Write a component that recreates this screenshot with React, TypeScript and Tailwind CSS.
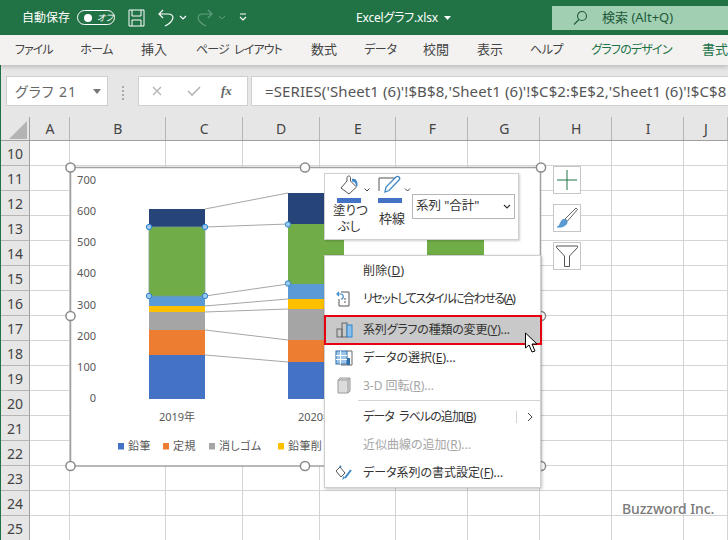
import React from "react";

const font = "font-['Noto_Sans','Noto_Sans_CJK_JP',sans-serif]";

const tabs = [
  { t: "ファイル", c: "w-[37px] ml-[15px] tracking-[-1px]" },
  { t: "ホーム", c: "w-[33px] ml-[28px] tracking-[-0.6px]" },
  { t: "挿入", c: "w-[26px] ml-[28px] text-[13px]" },
  { t: "ページ レイアウト", c: "w-[85px] ml-[29px] tracking-[-0.9px] [word-spacing:3px]" },
  { t: "数式", c: "w-[26px] ml-[30px] text-[13px]" },
  { t: "データ", c: "w-[31px] ml-[27px] tracking-[-0.3px]" },
  { t: "校閲", c: "w-[26px] ml-[28px] text-[13px]" },
  { t: "表示", c: "w-[26px] ml-[28px] text-[13px]" },
  { t: "ヘルプ", c: "w-[32px] ml-[27px] tracking-[-0.4px]" },
  { t: "グラフのデザイン", c: "w-[81px] ml-[29px] text-[#217346] tracking-[-0.8px]" },
  { t: "書式", c: "w-[26px] ml-[30px] text-[#217346] text-[13px]" },
];

const cols = [
  { n: "A", c: "w-[40px]" },
  { n: "B", c: "w-[96px]" },
  { n: "C", c: "w-[77px]" },
  { n: "D", c: "w-[77px]" },
  { n: "E", c: "w-[77px]" },
  { n: "F", c: "w-[72px]" },
  { n: "G", c: "w-[72px]" },
  { n: "H", c: "w-[72px]" },
  { n: "I", c: "w-[72px]" },
  { n: "J", c: "w-[44px]" },
];

const rows = [10, 11, 12, 13, 14, 15, 16, 17, 18, 19, 20, 21, 22, 23, 24, 25];

function Chart() {
  const colors = ["#4472c4", "#ed7d31", "#a5a5a5", "#ffc000", "#5b9bd5", "#70ad47", "#264478"];
  const b1 = [399, 355, 330, 312, 306, 296, 227, 209];
  const b2 = [399, 362, 340, 309, 299, 284, 224, 193];
  const yl = [["700", 184], ["600", 215], ["500", 246], ["400", 277], ["300", 309], ["200", 340], ["100", 371], ["0", 402]] as const;
  const legend = [
    ["鉛筆", 118, 128, colors[0]],
    ["定規", 163, 173, colors[1]],
    ["消しゴム", 209, 219, colors[2]],
    ["鉛筆削", 278, 288, colors[3]],
  ] as const;
  const pts = [[149, 227], [205, 227], [149, 296], [205, 296], [288, 224.5], [288, 283.5]];
  const handles = [[70.5, 167.5], [305, 167.5], [541, 167.5], [70.5, 316], [541, 316], [70.5, 466], [305, 466], [541, 466]];
  return (
    <svg className="absolute left-0 top-0" width="728" height="540" viewBox="0 0 728 540">
      <rect x="70.5" y="167.5" width="470" height="298.5" fill="#fff" stroke="#a0a0a0" strokeWidth="1.5" />
      {yl.map(([t, y]) => (
        <text key={t} x="96" y={y} textAnchor="end" fontSize="11" fill="#595959">{t}</text>
      ))}
      {b1.slice(0, -1).map((y, i) => (
        <rect key={i} x="149" y={b1[i + 1]} width="56" height={y - b1[i + 1]} fill={colors[i]} />
      ))}
      {b2.slice(0, -1).map((y, i) => (
        <rect key={i} x="288" y={b2[i + 1]} width="56" height={y - b2[i + 1]} fill={colors[i]} />
      ))}
      <rect x="427" y="200" width="57" height="60" fill={colors[5]} />
      {b1.slice(1).map((y, i) => (
        <line key={i} x1="205" y1={y} x2="288" y2={b2[i + 1]} stroke="#a6a6a6" strokeWidth="1" />
      ))}
      <rect x="149" y="227" width="56" height="69" fill="none" stroke="#7f9f8f" strokeWidth="0.8" />
      {pts.map(([x, y], i) => (
        <circle key={i} cx={x} cy={y} r="2.7" fill="#9dc8ec" stroke="#2f86d0" strokeWidth="1" />
      ))}
      <text x="177" y="421" textAnchor="middle" fontSize="11" fill="#595959">2019年</text>
      <text x="316" y="421" textAnchor="middle" fontSize="11" fill="#595959">2020年</text>
      {legend.map(([t, sx, tx, c]) => (
        <g key={t}>
          <rect x={sx} y="443" width="6" height="6.5" fill={c} />
          <text x={tx} y="450" fontSize="11" letterSpacing="0.4" fill="#595959">{t}</text>
        </g>
      ))}
      {handles.map(([x, y], i) => (
        <circle key={i} cx={x} cy={y} r="4.6" fill="#fff" stroke="#8a8a8a" strokeWidth="1.5" />
      ))}
    </svg>
  );
}

function MiniToolbar() {
  return (
    <div className="absolute left-[324px] top-[173px] flex h-[67px] w-[195px] border border-[#d0d0d0] bg-white shadow-[1px_1px_2px_rgba(0,0,0,0.2)]">
      <div className="ml-[8px] flex w-[40px] flex-col">
        <svg width="42" height="30" viewBox="0 0 42 30">
          <path d="M8 14 L14 7 V3.5 C14 1.5 17.5 1.5 17.5 3.5 V7 L23.5 13 L16 20 Z" fill="#fff" stroke="#555" strokeWidth="1" />
          <path d="M19 5 C23 4 25 8 24.5 12 L23 12 C23 9 21.5 7.5 19 7.5 Z" fill="#3f88c8" />
          <rect x="4" y="24" width="24" height="5" fill="#4472c4" />
          <path d="M31.5 14.5 L34 17 L36.5 14.5" fill="none" stroke="#444" strokeWidth="1" />
        </svg>
        <div className="mt-[-1px] w-[32px] whitespace-nowrap text-center text-[12.5px] leading-[16px] text-[#333]">
          <div>塗りつ</div>
          <div>ぶし</div>
        </div>
      </div>
      <div className="ml-[4px] flex w-[36px] flex-col items-center">
        <svg width="38" height="30" viewBox="0 0 38 30">
          <path d="M3 17 V4 H20" fill="none" stroke="#555" strokeWidth="1" />
          <path d="M9 18 L10 13 L20 3 C22 1 25 4 23 6 L13 16.5 Z" fill="#fff" stroke="#3f88c8" strokeWidth="1.3" />
          <path d="M2 24 H26 V29 H2 Z" fill="#4472c4" />
          <path d="M29 14.5 L31.5 17 L34 14.5" fill="none" stroke="#444" strokeWidth="1" />
        </svg>
        <div className="mt-[6px] ml-[-6px] text-[13px] leading-[16px] text-[#333]">枠線</div>
      </div>
      <div className="ml-[-1px] mt-[20px] flex h-[25px] w-[103px] items-center justify-between border border-[#b5b5b5] pl-[3px] pr-[3px] text-[12.5px] text-[#333]">
        <span>系列 "合計"</span>
        <svg width="8" height="6" viewBox="0 0 8 6"><path d="M1 1 L4 4 L7 1" fill="none" stroke="#333" strokeWidth="1.2" /></svg>
      </div>
    </div>
  );
}

function Underlined({ a, k, b, c }: { a: string; k: string; b: string; c?: string }) {
  return (
    <span className={c}>
      {a}(<span className="underline">{k}</span>){b}
    </span>
  );
}

function Menu() {
  return (
    <div className="absolute left-[324px] top-[255px] h-[233px] w-[217px] border border-[#cfcfcf] bg-white pt-[1px] text-[12px] text-[#333] shadow-[1px_1px_3px_rgba(0,0,0,0.25)]">
      <div className="flex h-[28px] items-center pl-[38px]"><Underlined a="削除" k="D" b="" c="tracking-[0.3px]" /></div>
      <div className="flex h-[28px] items-center">
        <span className="flex w-[38px] justify-center">
          <svg width="16" height="18" viewBox="0 0 16 18">
            <path d="M5 2 H13 V16 H3 V9" fill="none" stroke="#555" strokeWidth="1" />
            <path d="M1 4 H5 C8 4 8 9 5 9 M3 2 L1 4 L3 6" fill="none" stroke="#3f88c8" strokeWidth="1.2" />
            <path d="M8 9 H10 M8 12 H10" stroke="#555" strokeWidth="1" />
          </svg>
        </span>
        <Underlined a="リセットしてスタイルに合わせる" k="A" b="" c="tracking-[-1.4px]" />
      </div>
      <div className="ml-[-1px] mt-[2px] mb-[-1px] flex h-[30px] w-[218px] items-center border-2 border-[#e60012] bg-[#c9c9c9]">
        <span className="flex w-[37px] justify-center">
          <svg width="18" height="16" viewBox="0 0 18 16">
            <rect x="1" y="7" width="5" height="8" fill="none" stroke="#666" />
            <rect x="6" y="1" width="5" height="14" fill="none" stroke="#666" />
            <rect x="11" y="3" width="5" height="12" fill="#8cc0ec" stroke="#2f86d0" />
          </svg>
        </span>
        <Underlined a="系列グラフの種類の変更" k="Y" b="..." c="tracking-[-0.2px]" />
      </div>
      <div className="flex h-[28px] items-center">
        <span className="flex w-[38px] justify-center">
          <svg width="18" height="16" viewBox="0 0 18 16">
            <rect x="1" y="1" width="11" height="13" fill="#9cc6ea" stroke="#2f6ea8" />
            <path d="M1 5.5 H12 M1 9.5 H12 M5.5 1 V14" stroke="#fff" strokeWidth="1" />
            <path d="M12 1 H17 V15 H6" fill="none" stroke="#666" />
            <rect x="12" y="8" width="3" height="7" fill="#2f6ea8" />
          </svg>
        </span>
        <Underlined a="データの選択" k="E" b="..." />
      </div>
      <div className="flex h-[28px] items-center text-[#a6a6a6]">
        <span className="flex w-[38px] justify-center">
          <svg width="16" height="18" viewBox="0 0 16 18">
            <path d="M2 3 H12 L14 1 M2 3 V16 H12 V3 M12 16 L14 14 V1 H4 L2 3" fill="#dcdcdc" stroke="#9a9a9a" />
          </svg>
        </span>
        <Underlined a="3-D 回転" k="R" b="..." />
      </div>
      <div className="ml-[33px] h-[1px] w-[182px] bg-[#d4d4d4]" />
      <div className="mt-[2px] flex h-[28px] items-center pl-[38px]">
        <Underlined a="データ ラベルの追加" k="B" b="" c="tracking-[-0.9px] [word-spacing:3px]" />
        <span className="ml-auto flex h-[12px] w-[24px] items-center justify-center border-l border-[#d4d4d4] pl-[2px]">
          <svg width="8" height="10" viewBox="0 0 8 10"><path d="M2 1 L6 5 L2 9" fill="none" stroke="#444" strokeWidth="1" /></svg>
        </span>
      </div>
      <div className="flex h-[28px] items-center pl-[38px] text-[#a6a6a6]"><Underlined a="近似曲線の追加" k="R" b="..." /></div>
      <div className="flex h-[28px] items-center">
        <span className="flex w-[38px] justify-center">
          <svg width="18" height="16" viewBox="0 0 18 16">
            <path d="M1 6 L5 2 L10 8 L6 12 Z" fill="#fff" stroke="#555" />
            <path d="M5 2 L6 0.8 M10 13 L16 5" stroke="#3f88c8" strokeWidth="2" />
            <path d="M7 15 L10 13 L8.5 11 Z" fill="#3f88c8" />
          </svg>
        </span>
        <Underlined a="データ系列の書式設定" k="F" b="..." />
      </div>
    </div>
  );
}

function SideButtons() {
  return (
    <div className="absolute left-[553px] top-[166px] flex flex-col gap-[10px]">
      <div className="flex h-[28px] w-[28px] items-center justify-center border border-[#c6c6c6] bg-white">
        <svg width="22" height="22" viewBox="0 0 22 22"><path d="M11 1 V21 M1 11 H21" stroke="#217346" strokeWidth="1" /></svg>
      </div>
      <div className="flex h-[28px] w-[28px] items-center justify-center border border-[#c6c6c6] bg-white">
        <svg width="24" height="24" viewBox="0 0 24 24">
          <path d="M10 13 L21 2 L22.5 3.5 L12.5 15 Z" fill="#fff" stroke="#666" strokeWidth="1" />
          <path d="M2 21 C5 21 5 15 8 13.5 C10 12.5 13 15 12 17 C11 20 6 22 2 21 Z" fill="#5b9bd5" stroke="#3f88c8" strokeWidth="0.6" />
        </svg>
      </div>
      <div className="flex h-[28px] w-[28px] items-center justify-center border border-[#c6c6c6] bg-white">
        <svg width="24" height="24" viewBox="0 0 24 24"><path d="M1.5 2 H22.5 V3.5 L14.5 12 V22.5 H9.5 V12 L1.5 3.5 Z" fill="#fff" stroke="#555" strokeWidth="1" /></svg>
      </div>
    </div>
  );
}

export default function App() {
  return (
    <div className={`relative h-[540px] w-[728px] overflow-hidden bg-white [font-feature-settings:'palt'] ${font}`}>
      <div className="flex h-[35px] items-center bg-[#217346] text-white">
        <span className="ml-[22px] text-[12px]">自動保存</span>
        <div className="ml-[7px] flex h-[15px] w-[38px] items-center rounded-full border border-white pl-[6px]">
          <span className="h-[8px] w-[8px] rounded-full bg-white" />
          <span className="ml-[5px] text-[9px] italic leading-none">オフ</span>
        </div>
        <svg className="ml-[13px]" width="17" height="18" viewBox="0 0 17 18">
          <path d="M1 1 H16 V17 H1 Z M4 1 V7 H13 V1 M4 17 V11 H13 V17" fill="none" stroke="#fff" strokeWidth="1" />
        </svg>
        <svg className="ml-[12px]" width="18" height="18" viewBox="0 0 18 18">
          <path d="M6 1 L2 5 L6 9 M2 5 H11 C18 5 18 12 8 17" fill="none" stroke="#fff" strokeWidth="1.2" />
        </svg>
        <svg className="ml-[4px]" width="8" height="6" viewBox="0 0 8 6"><path d="M1 1 L4 4 L7 1" fill="none" stroke="#fff" strokeWidth="1.2" /></svg>
        <svg className="ml-[9px]" width="18" height="18" viewBox="0 0 18 18">
          <path d="M12 1 L16 5 L12 9 M16 5 H7 C0 5 0 12 10 17" fill="none" stroke="#5f9e7c" strokeWidth="1.2" />
        </svg>
        <svg className="ml-[4px]" width="8" height="6" viewBox="0 0 8 6"><path d="M1 1 L4 4 L7 1" fill="none" stroke="#5f9e7c" strokeWidth="1" /></svg>
        <svg className="ml-[13px]" width="8" height="9" viewBox="0 0 8 9"><path d="M1 1 H7 M1 4 L4 7 L7 4" fill="none" stroke="#fff" strokeWidth="1.2" /></svg>
        <span className="ml-[109px] w-[83px] whitespace-nowrap text-[12px] tracking-[-0.2px]">Excelグラフ.xlsx</span>
        <svg className="ml-[5px]" width="7" height="4" viewBox="0 0 7 4"><path d="M0 0 H7 L3.5 4 Z" fill="#fff" /></svg>
        <div className="ml-auto flex h-[24px] w-[176px] items-center bg-[#a0cfb2] pl-[21px] text-[13px] text-[#1f5a3a]">
          <svg width="15" height="15" viewBox="0 0 15 15"><circle cx="9" cy="6" r="4.5" fill="none" stroke="#1f5a3a" strokeWidth="1.1" /><path d="M6 9.5 L1 14.5" stroke="#1f5a3a" strokeWidth="1.1" /></svg>
          <span className="ml-[14px]">検索 (Alt+Q)</span>
        </div>
      </div>
      <div className="relative z-10 flex h-[30px] items-center whitespace-nowrap bg-[#f3f2f1] text-[12px] text-[#444] shadow-[0_2px_4px_rgba(0,0,0,0.18)]">
        {tabs.map((t) => (
          <span key={t.t} className={`text-center ${t.c}`}>{t.t}</span>
        ))}
      </div>
      <div className="border-l border-[#217346] bg-[#e6e6e6]">
        <div className="flex h-[52px] items-start pt-[11px] text-[14px]">
          <div className="ml-[5px] flex h-[30px] w-[102px] items-center justify-between border border-[#d0d0d0] bg-white pl-[8px] pr-[6px] text-[#666]">
            <span className="tracking-[1px]">グラフ 21</span>
            <svg width="8" height="5" viewBox="0 0 8 5"><path d="M0 0 H8 L4 5 Z" fill="#777" /></svg>
          </div>
          <div className="ml-[14px] mt-[10px] flex flex-col gap-[2px]">
            <span className="h-[2px] w-[2px] bg-[#aaa]" />
            <span className="h-[2px] w-[2px] bg-[#aaa]" />
            <span className="h-[2px] w-[2px] bg-[#aaa]" />
            <span className="h-[2px] w-[2px] bg-[#aaa]" />
          </div>
          <div className="ml-[14px] flex h-[30px] w-[110px] items-center border border-[#d0d0d0] bg-white">
            <svg className="ml-[12px]" width="12" height="12" viewBox="0 0 12 12"><path d="M2 2 L10 10 M10 2 L2 10" stroke="#b5b5b5" strokeWidth="1.4" /></svg>
            <svg className="ml-[24px]" width="14" height="12" viewBox="0 0 14 12"><path d="M1 6 L5 10 L13 2" fill="none" stroke="#b5b5b5" strokeWidth="1.6" /></svg>
            <span className="ml-[20px] font-['Liberation_Serif',serif] text-[13px] font-bold italic text-[#666]">fx</span>
          </div>
          <div className="ml-[3px] flex h-[30px] flex-1 items-center overflow-hidden whitespace-nowrap border border-[#d0d0d0] border-r-0 bg-white pl-[13px] text-[15px] tracking-[0.1px] text-[#555]">
            =SERIES('Sheet1 (6)'!$B$8,'Sheet1 (6)'!$C$2:$E$2,'Sheet1 (6)'!$C$8
          </div>
        </div>
        <div className="flex h-[24px] border-b border-[#9f9f9f] text-[14px] text-[#444]">
          <div className="relative w-[29px] border-r border-[#9f9f9f]">
            <svg className="absolute left-[8px] top-[4px]" width="18" height="18" viewBox="0 0 18 18"><path d="M18 0 V18 H0 Z" fill="#b4b4b4" /></svg>
          </div>
          {cols.map((c) => (
            <div key={c.n} className={`flex items-center justify-center border-r border-[#b5b5b5] pl-[1px] ${c.c}`}>{c.n}</div>
          ))}
        </div>
        {rows.map((r) => (
          <div key={r} className="flex h-[25px]">
            <div className="flex w-[29px] items-center justify-center border-r border-b border-r-[#9f9f9f] border-b-[#b5b5b5] bg-[#e6e6e6] text-[14px] text-[#444]">{r}</div>
            {cols.map((c) => (
              <div key={c.n} className={`border-r border-b border-[#d4d4d4] bg-white ${c.c}`} />
            ))}
          </div>
        ))}
      </div>
      <Chart />
      <MiniToolbar />
      <Menu />
      <SideButtons />
      <svg className="absolute left-[524px] top-[332px]" width="16" height="22" viewBox="0 0 16 22">
        <path d="M1.5 1 V16 L5 13 L8 20 L11 19 L8 12 L13 12 Z" fill="#fff" stroke="#000" strokeWidth="1" />
      </svg>
      <span className="absolute left-[622px] top-[498px] text-[14px] font-medium tracking-[-0.1px] text-[#7a7a7a]">Buzzword Inc.</span>
    </div>
  );
}
